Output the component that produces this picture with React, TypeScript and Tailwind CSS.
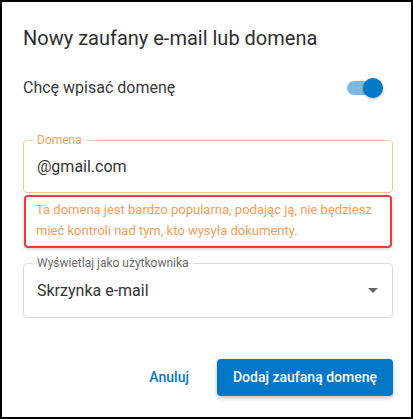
export default function App() {
  return (
    <div className="w-[413px] h-[419px] border-2 border-black bg-white font-['Roboto',sans-serif] pl-[21px] pr-[18px] pt-[22px]">
      {/* Title */}
      <h1 className="text-[20px] leading-[28px] text-[#2e2e2e]">Nowy zaufany e-mail lub domena</h1>

      {/* Switch row */}
      <div className="mt-[24px] h-6 flex items-center justify-between">
        <span className="text-[16px] text-[#3a3a3a]">Chcę wpisać domenę</span>
        <div className="relative w-[36px] h-5 mr-[10px]">
          <div className="absolute left-0 right-[2px] top-[3px] h-[14px] rounded-full bg-[#7fb7e2]" />
          <div className="absolute right-0 top-0 w-5 h-5 rounded-full bg-[#0277c6] shadow-[0_1px_3px_rgba(0,0,0,0.3)]" />
        </div>
      </div>

      {/* Domain field */}
      <div className="relative mt-[40px] h-[53px] border border-[#f9c896] rounded flex items-center pl-[13px]">
        <span className="absolute -top-[8px] left-[9px] px-1 bg-white text-[12px] leading-[14px] text-[#f3a060]">Domena</span>
        <span className="text-[16px] text-[#333]">@gmail.com</span>
      </div>

      {/* Warning */}
      <div className="mt-[2px] mx-[1px] h-[53px] border-2 border-[#ef3b3b] rounded-[4px] shadow-[0_1px_4px_rgba(0,0,0,0.2)] pl-[10px] pt-[2px]">
        <p className="text-[13px] leading-[21px] text-[#f29e5c]">
          Ta domena jest bardzo popularna, podając ją, nie będziesz
          <br />
          mieć kontroli nad tym, kto wysyła dokumenty.
        </p>
      </div>

      {/* Select */}
      <div className="relative mt-[15px] h-[55px] border border-[#dcdcdc] rounded flex items-center justify-between pl-[13px] pr-[14px]">
        <span className="absolute -top-[8px] left-[9px] px-1 bg-white text-[12px] leading-[14px] text-[#6a6a6a]">Wyświetlaj jako użytkownika</span>
        <span className="text-[16px] text-[#333]">Skrzynka e-mail</span>
        <svg width="10" height="5" viewBox="0 0 10 5">
          <path d="M0 0 L10 0 L5 5 Z" fill="#666" />
        </svg>
      </div>

      {/* Actions */}
      <div className="mt-[41px] flex items-center justify-end gap-5">
        <button className="px-2 h-[37px] text-[14px] font-medium text-[#0277c6]">Anuluj</button>
        <button className="px-4 h-[37px] rounded bg-[#0277c6] text-white text-[14px] font-medium shadow-[0_2px_4px_rgba(0,0,0,0.25)]">
          Dodaj zaufaną domenę
        </button>
      </div>
    </div>
  );
}
